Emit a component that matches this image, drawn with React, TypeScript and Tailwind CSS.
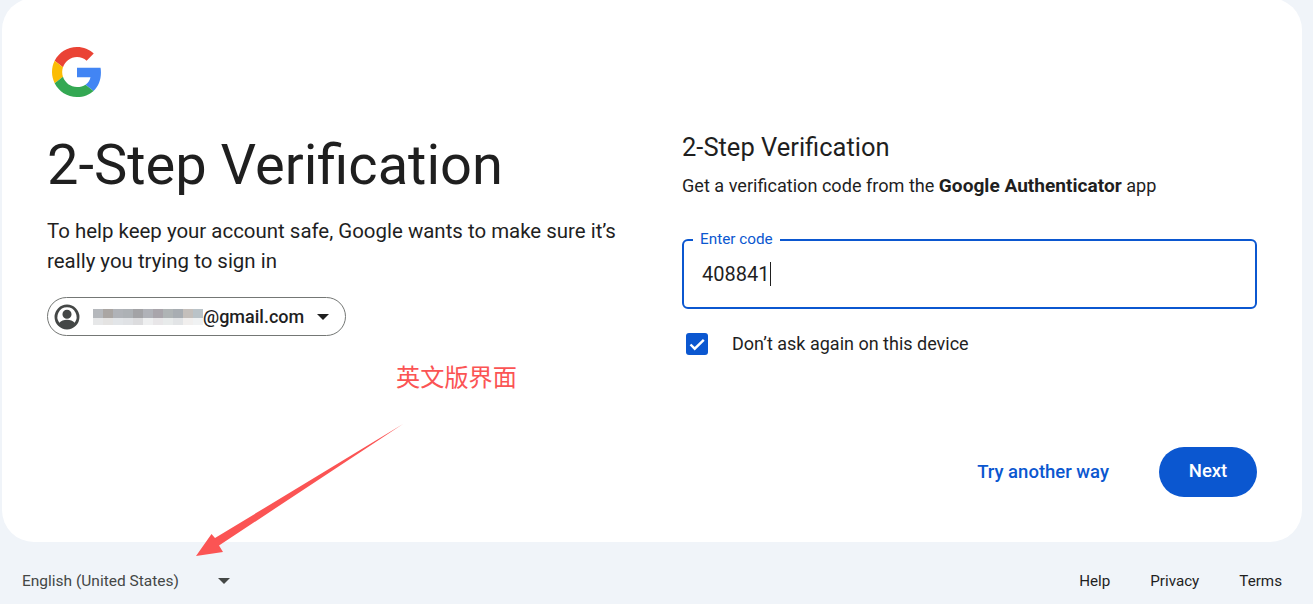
const mosaicTop = ["bg-[#b5b8bc]","bg-[#aaa6a3]","bg-[#b0b3b8]","bg-[#adb1b5]","bg-[#a3a3a6]","bg-[#b0b2b8]","bg-[#a9a5ab]","bg-[#afb4b5]","bg-[#a8adb2]","bg-[#c4bfbb]","bg-[#bac3c8]"];
const mosaicBottom = ["bg-[#e6e7e8]","bg-[#e4e3e2]","bg-[#e2e5e8]","bg-[#e0e2e5]","bg-[#dcdcde]","bg-[#eeeff0]","bg-[#e8e6e8]","bg-[#e8ebeb]","bg-[#e2e4e6]","bg-[#f1efee]","bg-[#f0f2f3]"];

function GoogleLogo() {
  return (
    <svg width="50" height="50" viewBox="0 0 48 48" className="ml-[5px]">
      <path fill="#EA4335" d="M24 9.5c3.54 0 6.71 1.22 9.21 3.6l6.85-6.85C35.9 2.38 30.47 0 24 0 14.62 0 6.51 5.38 2.56 13.22l7.98 6.19C12.43 13.72 17.74 9.5 24 9.5z" />
      <path fill="#4285F4" d="M46.98 24.55c0-1.57-.15-3.09-.38-4.55H24v9.02h12.94c-.58 2.96-2.26 5.48-4.78 7.18l7.73 6c4.51-4.18 7.09-10.36 7.09-17.65z" />
      <path fill="#FBBC05" d="M10.53 28.59c-.48-1.45-.76-2.99-.76-4.59s.27-3.14.76-4.59l-7.98-6.19C.92 16.46 0 20.12 0 24c0 3.88.92 7.54 2.56 10.78l7.97-6.19z" />
      <path fill="#34A853" d="M24 48c6.48 0 11.93-2.13 15.89-5.81l-7.73-6c-2.15 1.45-4.92 2.3-8.16 2.3-6.26 0-11.57-4.22-13.47-9.91l-7.98 6.19C6.51 42.62 14.62 48 24 48z" />
    </svg>
  );
}

function Caret({ className }: { className: string }) {
  return (
    <svg width="12" height="6" viewBox="0 0 12 6" className={className}>
      <path d="M0 0h12L6 6z" fill="currentColor" />
    </svg>
  );
}

export default function App() {
  return (
    <div className="relative h-[604px] w-[1313px] overflow-hidden bg-[#f0f4f9] font-['Roboto','Noto_Sans_CJK_SC',sans-serif] text-[#1f1f1f]">
      <main className="mx-[2px] -mt-[2px] flex h-[544px] w-[1300px] rounded-[32px] bg-white pt-[49px]">
        <section className="w-[680px] pl-[45px]">
          <GoogleLogo />
          <h1 className="mt-[34px] text-[56px] leading-[68px] font-normal whitespace-nowrap">2-Step Verification</h1>
          <p className="mt-[17px] w-[590px] text-[20.45px] leading-[30px]">
            To help keep your account safe, Google wants to make sure it’s really you trying to sign in
          </p>
          <div className="mt-[21px] flex h-[39px] w-[299px] items-center rounded-full border border-[#747775] pl-[6px]">
            <svg width="26" height="26" viewBox="0 0 24 24" className="text-[#444746]">
              <path fill="currentColor" fillRule="evenodd" d="M12 .5a11.5 11.5 0 1 0 0 23 11.5 11.5 0 0 0 0-23zm0 2.6a8.9 8.9 0 0 1 7.1 14.2c-1.6-1.7-4.2-2.7-7.1-2.7s-5.5 1-7.1 2.7A8.9 8.9 0 0 1 12 3.100zM12 5.300a4.200 4.200 0 1 0 0 8.400 4.200 4.200 0 0 0 0-8.400z" />
            </svg>
            <div className="ml-[13px] flex flex-col">
              <div className="flex">{mosaicTop.map((c, i) => <div key={i} className={`h-[9px] w-[10px] ${c}`} />)}</div>
              <div className="flex">{mosaicBottom.map((c, i) => <div key={i} className={`h-[7px] w-[10px] ${c}`} />)}</div>
            </div>
            <span className="text-[18px] leading-[24px] font-medium">@gmail.com</span>
            <Caret className="ml-[13px] text-[#1f1f1f]" />
          </div>
        </section>

        <section className="flex w-[575px] flex-col">
          <h2 className="mt-[84px] text-[25.5px] leading-[32px] font-normal">2-Step Verification</h2>
          <p className="mt-[11px] text-[18.1px] leading-[24px]">
            Get a verification code from the <b className="text-[19.1px] font-bold">Google Authenticator</b> app
          </p>
          <div className="relative mt-[41px] flex h-[70px] w-[575px] items-center rounded-[6px] border-2 border-[#0b57d0] pl-[18px]">
            <span className="absolute -top-[11px] left-[9px] bg-white px-[7px] text-[15.3px] leading-[18px] text-[#0b57d0]">Enter code</span>
            <span className="text-[20px] leading-[24px]">408841</span>
            <span className="ml-px h-[24px] w-px bg-[#1f1f1f]" />
          </div>
          <label className="mt-[23px] flex items-center">
            <span className="ml-[4px] flex h-[22px] w-[22px] items-center justify-center rounded-[3px] bg-[#0b57d0]">
              <svg width="18" height="18" viewBox="0 0 18 18"><path d="M2.5 9.500l4.200 4.200L15.800 4.800" fill="none" stroke="#fff" strokeWidth="2.4" /></svg>
            </span>
            <span className="ml-[24px] text-[18px] leading-[24px]">Don’t ask again on this device</span>
          </label>
          <div className="mt-[91px] flex items-center justify-end">
            <a className="text-[18.5px] leading-[24px] font-medium text-[#0b57d0]">Try another way</a>
            <button className="ml-[50px] h-[50px] w-[98px] rounded-full bg-[#0b57d0] text-[18.5px] font-medium text-white">Next</button>
          </div>
        </section>
      </main>

      <footer className="flex h-[62px] items-center justify-between pt-[15px] pr-[31px] pl-[22px] text-[15.5px] leading-[20px]">
        <div className="flex items-center text-[#444746]">
          <span className="w-[196px]">English (United States)</span>
          <Caret className="text-[#444746]" />
        </div>
        <nav className="flex gap-[40px] text-[15.2px] text-[#1f1f1f]">
          <a>Help</a>
          <a>Privacy</a>
          <a>Terms</a>
        </nav>
      </footer>

      <span className="absolute top-[362px] left-[396px] text-[24.2px] leading-[32px] text-[#fb5454]">英文版界面</span>
      <svg className="absolute top-[420px] left-[190px]" width="220" height="140" viewBox="190 420 220 140">
        <path d="M403 424L215 538L211.5 534L196 556L223 552L219 545.5Z" fill="#fb5454" />
      </svg>
    </div>
  );
}
